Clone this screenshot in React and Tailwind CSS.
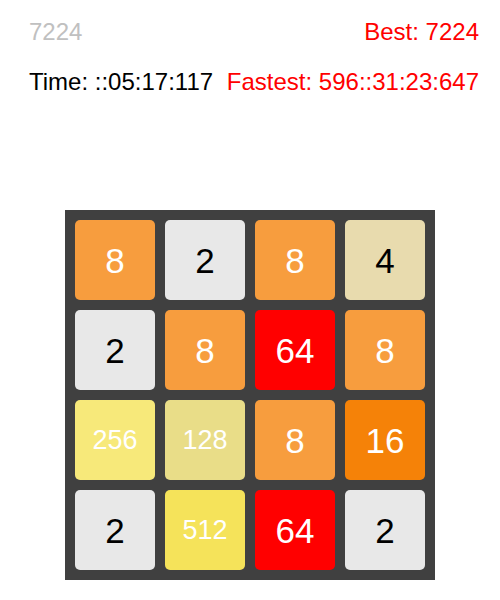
import React from "react";

const tiles = [
  [8, 2, 8, 4],
  [2, 8, 64, 8],
  [256, 128, 8, 16],
  [2, 512, 64, 2],
];

const styles = {
  2: "bg-[#e8e8e8] text-black text-[35px]",
  4: "bg-[#e8dbae] text-black text-[35px]",
  8: "bg-[#f79d3e] text-white text-[35px]",
  16: "bg-[#f58208] text-white text-[35px]",
  64: "bg-[#ff0000] text-white text-[35px]",
  128: "bg-[#e9dd88] text-white text-[27px]",
  256: "bg-[#f7e97a] text-white text-[27px]",
  512: "bg-[#f5e35a] text-white text-[27px]",
};

export default function App() {
  return (
    <div
      className="w-[500px] h-[600px] bg-white"
      style={{ fontFamily: '"Liberation Sans", Arial, sans-serif' }}
    >
      <div className="flex justify-between pl-[29px] pr-[21px] pt-[20px] text-[24px] leading-none">
        <span className="text-[#c0c0c0]">7224</span>
        <span className="text-[#ff0000]">Best: 7224</span>
      </div>
      <div className="flex justify-between pl-[29px] pr-[21px] pt-[26px] text-[24px] leading-none">
        <span className="text-black">Time: ::05:17:117</span>
        <span className="text-[#ff0000]">Fastest: 596::31:23:647</span>
      </div>
      <div className="flex justify-center pt-[116px]">
        <div className="grid grid-cols-4 gap-[10px] p-[10px] bg-[#404040] w-[370px]">
          {tiles.flat().map((v, i) => (
            <div
              key={i}
              className={`w-[80px] h-[80px] rounded-[5px] flex items-center justify-center leading-none ${styles[v]}`}
            >
              {v}
            </div>
          ))}
        </div>
      </div>
    </div>
  );
}
